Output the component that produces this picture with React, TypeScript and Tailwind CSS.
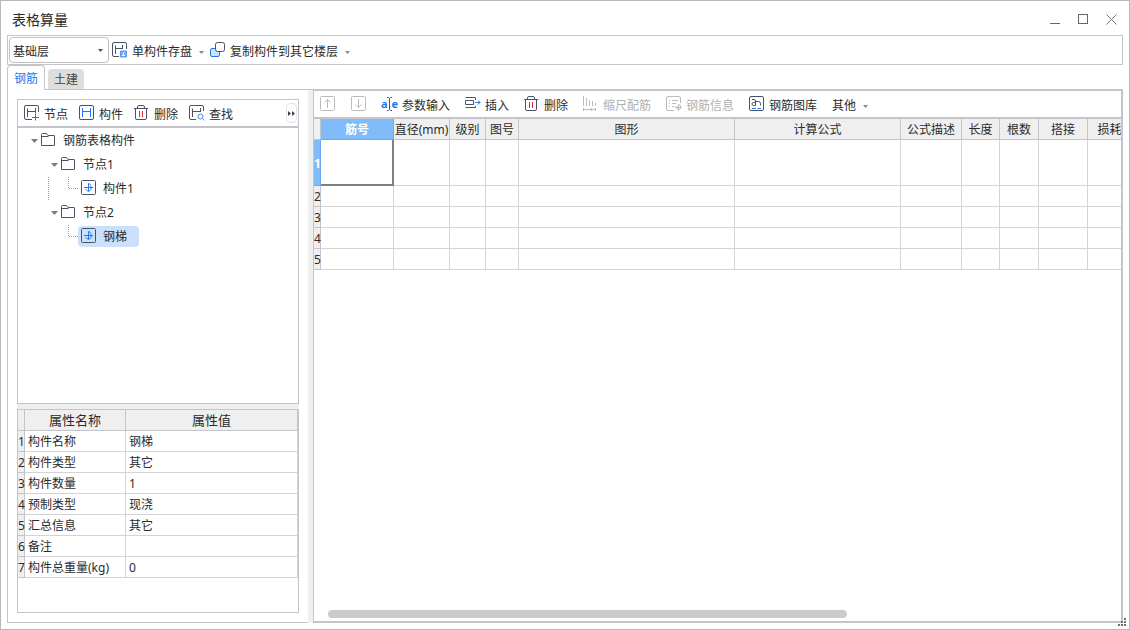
import { ReactNode } from "react";
import clsx from "clsx";

const INK = "#4a5266";
const BLUE = "#1e78eb";

interface IconProps {
  children: ReactNode;
  color?: string;
  width?: number;
}

const Icon = ({ children, color = INK, width = 16 }: IconProps) => (
  <svg
    width={width}
    height="16"
    viewBox={`0 0 ${width} 16`}
    fill="none"
    stroke={color}
    className="shrink-0"
    aria-hidden="true"
  >
    {children}
  </svg>
);

const Caret = ({ color = "#8a8a8a" }: { color?: string }) => (
  <svg width="5" height="3" viewBox="0 0 5 3" fill={color} className="shrink-0" aria-hidden="true">
    <path d="M0 0h5L2.5 3z" />
  </svg>
);

const SaveIcon = () => (
  <Icon>
    <path d="M7 14.5H2A1.5 1.5 0 0 1 .5 13V2A1.5 1.5 0 0 1 2 .5h11A1.5 1.5 0 0 1 14.5 2v5" />
    <path d="M3.5 12V3.5M3.5 6.5h7M10.5 3v4" />
    <path d="M8.5 9h6v6h-6z" stroke="#5b96e6" fill="#7fb2f3" />
    <path d="M10 13.5h3M11.5 10.5v2" stroke="#fff" />
  </Icon>
);

const CopyIcon = () => (
  <Icon>
    <rect x=".5" y="6.5" width="9" height="8" rx="1.5" stroke={BLUE} fill="#cfe3fc" />
    <rect x="5.5" y=".5" width="9" height="9" rx="2" fill="#fff" />
  </Icon>
);

const NodeIcon = () => (
  <Icon>
    <path d="M8 14.5H2A1.5 1.5 0 0 1 .5 13V2A1.5 1.5 0 0 1 2 .5h11A1.5 1.5 0 0 1 14.5 2v5" />
    <path d="M3.5 12V3.5M3.5 6.5h8M11.5 3v5" />
    <path d="M11.5 8.5v7M8 12.5h7" stroke={BLUE} />
  </Icon>
);

const MemberIcon = () => (
  <Icon>
    <rect x=".5" y=".5" width="14" height="14" rx="1.5" />
    <path d="M3.5 3v9M11.5 3v9M3.5 6.5h8" stroke={BLUE} />
  </Icon>
);

const FindIcon = () => (
  <Icon>
    <path d="M7 14.5H2A1.5 1.5 0 0 1 .5 13V2A1.5 1.5 0 0 1 2 .5h11A1.5 1.5 0 0 1 14.5 2v4" />
    <path d="M3.5 12V3.5M3.5 6.5h8M11.5 3v4" />
    <circle cx="11.5" cy="11.5" r="2.5" stroke="#3f8df0" />
    <path d="M13.5 13.5l2 2" stroke="#3f8df0" />
  </Icon>
);

const TrashIcon = () => (
  <Icon>
    <path d="M0 3.5h14M3.5 3V2A1.5 1.5 0 0 1 5 .5h4A1.5 1.5 0 0 1 10.5 2v1" />
    <path d="M1.5 4v9A1.5 1.5 0 0 0 3 14.5h8a1.5 1.5 0 0 0 1.5-1.5V4" />
    <path d="M5.5 6v6M8.5 6v6" stroke="#e0232c" />
  </Icon>
);

const UpIcon = () => (
  <Icon color="#bcbcbc" width={15}>
    <rect x=".5" y=".5" width="14" height="14" rx="1" />
    <path d="M7.5 12V3.5M4.5 6.5l3-3 3 3" />
  </Icon>
);

const DownIcon = () => (
  <Icon color="#bcbcbc" width={15}>
    <rect x=".5" y=".5" width="14" height="14" rx="1" />
    <path d="M7.5 3v8.5M4.5 8.5l3 3 3-3" />
  </Icon>
);

const ParamIcon = () => (
  <span className="flex h-4 w-[17px] shrink-0 items-center justify-between text-[11px] leading-4 font-bold text-[#1e78eb]">
    <span>a</span>
    <svg width="5" height="14" viewBox="0 0 5 14" fill="none" stroke={INK} className="-mx-px shrink-0">
      <path d="M0 .5h1.5l1 1 1-1H5M2.5 1.5v11M0 13.5h1.5l1-1 1 1H5" />
    </svg>
    <span>e</span>
  </span>
);

const InsertIcon = () => (
  <Icon>
    <path d="M10.5 4V1.5H.5M.5 4.5h8v4h-8zM.5 11.5h10V10" />
    <path d="M10 6.5h5M13 4.5l2 2-2 2" stroke={BLUE} />
  </Icon>
);

const ScaleIcon = () => (
  <Icon color="#bcbcbc">
    <path d="M.5 0v10M3.5 2v8M6.5 4v6M9.5 5v5M12.5 7v3M0 13.5h13M.5 12v3M8.5 12v3M12.5 12v3" />
  </Icon>
);

const InfoIcon = () => (
  <Icon color="#bcbcbc">
    <path d="M8 14.5H2A1.5 1.5 0 0 1 .5 13V2A1.5 1.5 0 0 1 2 .5h11A1.5 1.5 0 0 1 14.5 2v5" />
    <path d="M3 4.5h1M6 4.5h6M3 7.5h1M6 7.5h4M3 10.5h1M6 10.5h2" />
    <path d="M12.5 14.5V8.5M9 11.5h6.5M10.5 10v1.5c0 3 4 3 4 0V10c0-1-1-1.5-2-1.5" />
  </Icon>
);

const LibraryIcon = () => (
  <Icon>
    <rect x=".5" y=".5" width="14" height="14" rx="1.5" />
    <path d="M3 3.5h2A1.5 1.5 0 0 1 6.5 5v4.5M6.5 6.5h-2a1.5 1.5 0 0 0 0 3h2M6.5 5.5h3a2 2 0 0 1 2 2v2" />
    <path d="M3 12.5h4M8.5 12.5h3.5" stroke={BLUE} />
  </Icon>
);

const FolderIcon = () => (
  <Icon>
    <path d="M1.5 13.5v-11a1 1 0 0 1 1-1h4l1.5 2h6a.5.5 0 0 1 .5.5v9a.5.5 0 0 1-.5.5H2a.5.5 0 0 1-.5-.5M2 4.5h6.5" />
  </Icon>
);

const PieceIcon = () => (
  <Icon>
    <rect x=".5" y=".5" width="14" height="14" rx="1" />
    <path
      d="M3 7.5h9M7.5 3.5v8M7.5 3.5c1.2 0 2 .8 2 2M5 9c0 1 1 2 2.500 2s2.500-1 2.500-2V6"
      stroke={BLUE}
    />
  </Icon>
);

interface ToolProps {
  icon?: ReactNode;
  label: string;
  disabled?: boolean;
  menu?: boolean;
}

const Tool = ({ icon, label, disabled, menu }: ToolProps) => (
  <button
    type="button"
    disabled={disabled}
    className="flex shrink-0 items-center gap-1 whitespace-nowrap disabled:text-[#b0b0b0]"
  >
    {icon}
    <span className="flex items-center gap-[7px] pt-1">
      {label}
      {menu && <Caret />}
    </span>
  </button>
);

const TitleBar = () => (
  <header className="flex h-[34px] shrink-0 items-center justify-between pt-1 pr-[6px] pl-[5px]">
    <h1 className="text-sm">表格算量</h1>
    <div className="flex gap-[17px]">
      <button type="button" aria-label="最小化">
        <svg width="11" height="12" fill="none" stroke="#666">
          <path d="M0 9.5h10" />
        </svg>
      </button>
      <button type="button" aria-label="最大化">
        <svg width="11" height="12" fill="none" stroke="#666">
          <rect x=".5" y=".5" width="9" height="9" />
        </svg>
      </button>
      <button type="button" aria-label="关闭">
        <svg width="11" height="12" fill="none" stroke="#777">
          <path d="M.5 .5l10 10M10.5 .5l-10 10" />
        </svg>
      </button>
    </div>
  </header>
);

const MainToolbar = () => (
  <div className="flex h-[30px] shrink-0 items-center border border-[#c4c5ca] pl-px">
    <div className="relative">
      <select
        aria-label="楼层"
        className="h-[26px] w-[100px] appearance-none rounded border border-[#c0c0c4] bg-white pt-[3px] pl-[3px] outline-none"
      >
        <option>基础层</option>
        <option>首层</option>
      </select>
      <span className="pointer-events-none absolute top-3 right-[6px]">
        <Caret color="#4a5266" />
      </span>
    </div>
    <div className="flex items-center gap-[6px] pl-[3px]">
      <Tool icon={<SaveIcon />} label="单构件存盘" menu />
      <Tool icon={<CopyIcon />} label="复制构件到其它楼层" menu />
    </div>
  </div>
);

const Tabs = () => (
  <div role="tablist" className="flex h-[25px] shrink-0 items-end gap-[3px] border-b border-[#c4c5ca]">
    <button
      type="button"
      role="tab"
      aria-selected="true"
      className="-mb-px h-[25px] w-[38px] rounded-t border border-b-0 border-[#c4c5ca] bg-white pt-[2px] text-[#1e78eb]"
    >
      钢筋
    </button>
    <button
      type="button"
      role="tab"
      aria-selected="false"
      className="h-5 w-9 rounded-t bg-[#dedede] pt-[2px] text-[#444]"
    >
      土建
    </button>
  </div>
);

const Expander = () => (
  <svg width="8" height="5" className="mr-[2px] shrink-0" fill="#7a7a7a" aria-hidden="true">
    <path d="M1 1h7L4.5 5z" />
  </svg>
);

const Folder = ({ label, children }: { label: string; children?: ReactNode }) => (
  <li>
    <div className="flex h-6 items-center">
      <Expander />
      <FolderIcon />
      <span className="pt-[2px] pl-[7px]">{label}</span>
    </div>
    {children}
  </li>
);

interface PieceProps {
  label: string;
  last?: boolean;
  selected?: boolean;
}

const Piece = ({ label, last, selected }: PieceProps) => (
  <li className="flex h-6 items-center">
    <svg width="30" height="24" fill="none" stroke="#999" strokeDasharray="1 1" className="shrink-0">
      {!last && <path d="M.5 1v23" />}
      <path d="M20.5 1v11.5H30" />
    </svg>
    <div className={clsx("flex h-[21px] items-center rounded-sm pr-3 pl-[3px]", selected && "bg-[#cbe0fa]")}>
      <PieceIcon />
      <span className="pt-[2px] pl-[6px]">{label}</span>
    </div>
  </li>
);

const TreePanel = () => (
  <section className="flex min-h-0 flex-3 flex-col border border-[#c4c5ca]">
    <div className="flex h-7 shrink-0 items-center gap-[11px] border-b-2 border-[#c4c5ca] pr-px pl-[6px]">
      <Tool icon={<NodeIcon />} label="节点" />
      <Tool icon={<MemberIcon />} label="构件" />
      <Tool icon={<TrashIcon />} label="删除" />
      <Tool icon={<FindIcon />} label="查找" />
      <button
        type="button"
        aria-label="更多"
        className="ml-auto flex h-5 w-[11px] items-center justify-center rounded border border-[#e4e4e4]"
      >
        <svg width="7" height="5" fill="#3c4254" className="shrink-0">
          <path d="M0 0l3 2.5L0 5zM4 0l3 2.5L4 5z" />
        </svg>
      </button>
    </div>
    <ul className="min-h-0 flex-1 overflow-hidden pl-3">
      <Folder label="钢筋表格构件">
        <ul className="pl-5">
          <Folder label="节点1">
            <ul className="-ml-[2px]">
              <Piece label="构件1" />
            </ul>
          </Folder>
          <Folder label="节点2">
            <ul className="-ml-[2px]">
              <Piece label="钢梯" last selected />
            </ul>
          </Folder>
        </ul>
      </Folder>
    </ul>
  </section>
);

const properties = [
  ["构件名称", "钢梯"],
  ["构件类型", "其它"],
  ["构件数量", "1"],
  ["预制类型", "现浇"],
  ["汇总信息", "其它"],
  ["备注", ""],
  ["构件总重量(kg)", "0"],
];

const PropertyPanel = () => (
  <section className="min-h-0 flex-2 overflow-hidden border border-[#c4c5ca]">
    <table className="w-full table-fixed border-separate border-spacing-0">
      <colgroup>
        <col className="w-[7px]" />
        <col className="w-[101px]" />
        <col />
      </colgroup>
      <thead className="bg-[#efefef] text-[13px]">
        <tr className="h-[21px]">
          <th className="border-r border-b border-[#c4c5ca] p-0" />
          <th className="border-r border-b border-[#c4c5ca] p-0 pt-[2px] font-normal">属性名称</th>
          <th className="border-r border-b border-[#c4c5ca] p-0 pt-[2px] font-normal">属性值</th>
        </tr>
      </thead>
      <tbody>
        {properties.map(([name, value], i) => (
          <tr key={name} className="h-[21px]">
            <th className="border-r border-b border-[#c4c5ca] bg-[#efefef] p-0 pt-[2px] text-left font-normal">
              {i + 1}
            </th>
            <td className="border-r border-b border-[#d4d4d4] p-0 pt-[2px] pl-[3px] whitespace-nowrap">{name}</td>
            <td className="border-r border-b border-[#d4d4d4] p-0 pt-[2px] pl-[3px]">{value}</td>
          </tr>
        ))}
      </tbody>
    </table>
  </section>
);

const columns = [
  { label: "筋号", width: "w-[73px]" },
  { label: "直径(mm)", width: "w-[56px]" },
  { label: "级别", width: "w-[36px]" },
  { label: "图号", width: "w-[33px]" },
  { label: "图形", width: "w-[216px]" },
  { label: "计算公式", width: "w-[166px]" },
  { label: "公式描述", width: "w-[61px]" },
  { label: "长度", width: "w-[38px]" },
  { label: "根数", width: "w-[39px]" },
  { label: "搭接", width: "w-[49px]" },
  { label: "损耗", width: "w-[44px]" },
];

const RebarTable = () => (
  <table className="w-[818px] table-fixed border-separate border-spacing-0">
    <colgroup>
      <col className="w-[7px]" />
      {columns.map((c) => (
        <col key={c.label} className={c.width} />
      ))}
    </colgroup>
    <thead>
      <tr className="h-[21px] bg-[#efefef]">
        <th className="border-r border-b border-[#c4c5ca] p-0" />
        {columns.map((c, i) => (
          <th
            key={c.label}
            className={clsx(
              "border-r border-b p-0 pt-[2px] whitespace-nowrap",
              i === 0 ? "border-[#6aa8ee] bg-[#80bbfa] font-bold text-white" : "border-[#c4c5ca] font-normal",
            )}
          >
            {c.label}
          </th>
        ))}
      </tr>
    </thead>
    <tbody>
      {[1, 2, 3, 4, 5].map((n) => (
        <tr key={n} className={n === 1 ? "h-[46px]" : "h-[21px]"}>
          <th
            className={clsx(
              "border-r border-b p-0 pt-[2px] text-left",
              n === 1 ? "border-[#6aa8ee] bg-[#80bbfa] font-bold text-white" : "border-[#c4c5ca] bg-[#efefef] font-normal",
            )}
          >
            {n}
          </th>
          {columns.map((c, i) => (
            <td
              key={c.label}
              className={clsx(
                "p-0",
                n === 1 && i === 0 ? "border-r-2 border-b-2 border-[#808080]" : "border-r border-b border-[#d4d4d4]",
              )}
            />
          ))}
        </tr>
      ))}
    </tbody>
  </table>
);

const RebarPanel = () => (
  <main className="flex min-w-0 flex-1 flex-col border-t border-r-2 border-b-2 border-l border-[#c4c5ca]">
    <div className="flex h-7 shrink-0 items-center gap-[15px] overflow-hidden border-b-2 border-[#c4c5ca] pl-[6px]">
      <button type="button" disabled aria-label="上移" className="mr-px">
        <UpIcon />
      </button>
      <button type="button" disabled aria-label="下移">
        <DownIcon />
      </button>
      <Tool icon={<ParamIcon />} label="参数输入" />
      <Tool icon={<InsertIcon />} label="插入" />
      <Tool icon={<TrashIcon />} label="删除" />
      <Tool icon={<ScaleIcon />} label="缩尺配筋" disabled />
      <Tool icon={<InfoIcon />} label="钢筋信息" disabled />
      <Tool icon={<LibraryIcon />} label="钢筋图库" />
      <Tool label="其他" menu />
    </div>
    <div className="min-h-0 flex-1 overflow-hidden">
      <RebarTable />
    </div>
    <div className="shrink-0 pb-[3px] pl-[14px]">
      <div className="h-2 w-[519px] rounded-full bg-[#cbcbcb]" />
    </div>
  </main>
);

export default function App() {
  return (
    <div className="relative flex h-screen flex-col border border-[#b9b9b9] bg-white px-[6px] pb-[6px] font-['Noto_Sans','Noto_Sans_CJK_SC',sans-serif] text-xs text-[#2b2b2b]">
      <TitleBar />
      <MainToolbar />
      <Tabs />
      <div className="flex min-h-0 flex-1">
        <aside className="flex w-[301px] shrink-0 flex-col border-b border-l border-[#c4c5ca] p-[9px]">
          <TreePanel />
          <div className="h-[5px] shrink-0 bg-[#efefef]" />
          <PropertyPanel />
        </aside>
        <div className="w-[5px] shrink-0 bg-[#efefef]" />
        <RebarPanel />
      </div>
      <svg width="8" height="8" fill="#6b6f78" className="absolute right-[3px] bottom-[3px]" aria-hidden="true">
        <path d="M6 0h2v2H6zM3 3h2v2H3zM6 3h2v2H6zM0 6h2v2H0zM3 6h2v2H3zM6 6h2v2H6z" />
      </svg>
    </div>
  );
}
